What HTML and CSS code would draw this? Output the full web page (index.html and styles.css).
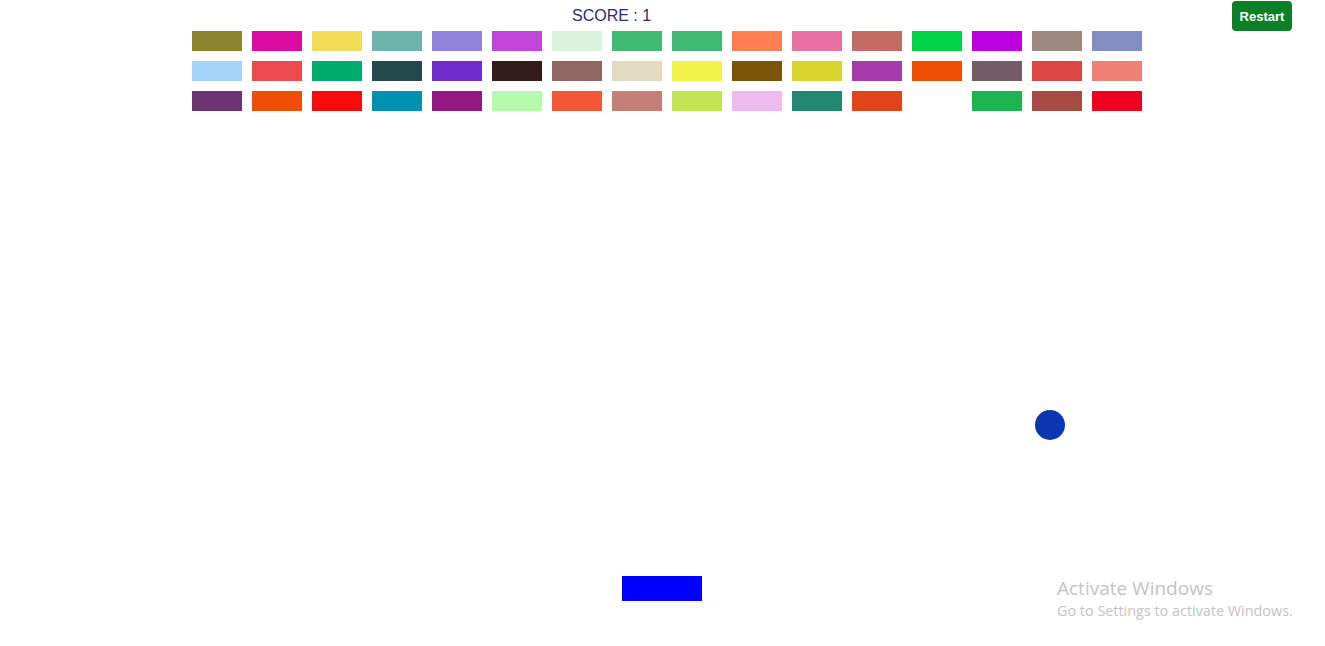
FILE: index.html
```html
<!DOCTYPE html>
<html lang="en">
  <head>
    <meta charset="UTF-8">
    <meta name="viewport" content="width=device-width">
    <title>Breakout</title>
    <link rel="stylesheet" href="styles.css">
  </head>
  <body>
    <header class="topbar">
      <p class="score">SCORE : <span id="score">1</span></p>
      <button type="button" class="restart">Restart</button>
    </header>

    <main class="field">
      <div class="bricks">
        <!-- row 1 -->
        <span class="brick" style="background:#8c8430"></span>
        <span class="brick" style="background:#db0aa0"></span>
        <span class="brick" style="background:#f2dc58"></span>
        <span class="brick" style="background:#6eb3ab"></span>
        <span class="brick" style="background:#9183d8"></span>
        <span class="brick" style="background:#c244d8"></span>
        <span class="brick" style="background:#d9f3dc"></span>
        <span class="brick" style="background:#41bb74"></span>
        <span class="brick" style="background:#41bb74"></span>
        <span class="brick" style="background:#fe7f53"></span>
        <span class="brick" style="background:#e86fa0"></span>
        <span class="brick" style="background:#c46b63"></span>
        <span class="brick" style="background:#00d348"></span>
        <span class="brick" style="background:#bb00e0"></span>
        <span class="brick" style="background:#9c887e"></span>
        <span class="brick" style="background:#848cc4"></span>
        <!-- row 2 -->
        <span class="brick" style="background:#a3d3f9"></span>
        <span class="brick" style="background:#ea4b4f"></span>
        <span class="brick" style="background:#00ab6e"></span>
        <span class="brick" style="background:#264a4c"></span>
        <span class="brick" style="background:#6e2acb"></span>
        <span class="brick" style="background:#321c1c"></span>
        <span class="brick" style="background:#916761"></span>
        <span class="brick" style="background:#e3dbc1"></span>
        <span class="brick" style="background:#f2f34a"></span>
        <span class="brick" style="background:#7a5508"></span>
        <span class="brick" style="background:#d8d42c"></span>
        <span class="brick" style="background:#a63aad"></span>
        <span class="brick" style="background:#ee4e02"></span>
        <span class="brick" style="background:#745b66"></span>
        <span class="brick" style="background:#db4542"></span>
        <span class="brick" style="background:#ee8075"></span>
        <!-- row 3 -->
        <span class="brick" style="background:#69346f"></span>
        <span class="brick" style="background:#ee4e08"></span>
        <span class="brick" style="background:#f70a0a"></span>
        <span class="brick" style="background:#0090b2"></span>
        <span class="brick" style="background:#921781"></span>
        <span class="brick" style="background:#b6fbab"></span>
        <span class="brick" style="background:#f35733"></span>
        <span class="brick" style="background:#c58076"></span>
        <span class="brick" style="background:#c2e352"></span>
        <span class="brick" style="background:#edbbee"></span>
        <span class="brick" style="background:#208870"></span>
        <span class="brick" style="background:#e24419"></span>
        <span class="brick broken"></span>
        <span class="brick" style="background:#1db450"></span>
        <span class="brick" style="background:#a64a42"></span>
        <span class="brick" style="background:#ee0020"></span>
      </div>

      <div class="ball" style="left:1035px; top:379px"></div>
      <div class="paddle" style="left:622px; top:545px"></div>
    </main>

    <aside class="activate">
      <p class="activate-title">Activate Windows</p>
      <p class="activate-text">Go to Settings to activate Windows.</p>
    </aside>
  </body>
</html>
```

FILE: styles.css
```css
html {
  font-family: "Liberation Sans", Arial, sans-serif;
}
body {
  margin: 0;
  height: 646px;
  overflow: hidden;
  background: #fff;
}
.topbar {
  display: flex;
  align-items: flex-start;
  height: 31px;
}
.score {
  margin: 7px 0 0 572px;
  font-size: 16px;
  line-height: 18px;
  color: #2e2a6e;
}
.restart {
  margin: 1px 33px 0 auto;
  width: 60px;
  height: 30px;
  padding: 0;
  border: none;
  border-radius: 4px;
  background: #0c7f27;
  color: #fff;
  font-family: inherit;
  font-size: 13px;
  font-weight: bold;
}
.field {
  position: relative;
  height: 615px;
}
.bricks {
  display: grid;
  grid-template-columns: repeat(16, 50px);
  grid-auto-rows: 20px;
  gap: 10px;
  margin-left: 192px;
}
.brick {
  display: block;
}
.broken {
  visibility: hidden;
}
.ball {
  position: absolute;
  width: 30px;
  height: 30px;
  border-radius: 50%;
  background: #0a37b1;
}
.paddle {
  position: absolute;
  width: 80px;
  height: 25px;
  background: #0000ff;
}
.activate {
  position: absolute;
  left: 1057px;
  top: 576px;
  font-family: "Open Sans", "Noto Sans", sans-serif;
  color: #c4c4c4;
}
.activate p {
  margin: 0;
}
.activate-title {
  font-size: 19px;
  line-height: 25px;
}
.activate-text {
  font-size: 14.4px;
  line-height: 20px;
}
```
